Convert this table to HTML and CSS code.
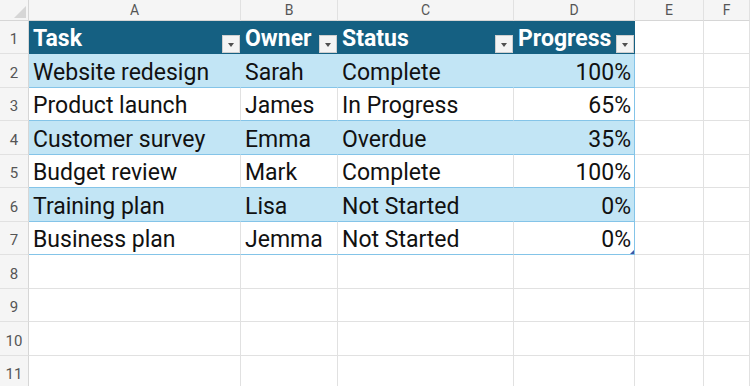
FILE: index.html
```html
<!DOCTYPE html>
<html>
<head>
<meta charset="utf-8">
<link rel="stylesheet" href="styles.css">
</head>
<body>
<div class="sheet">
  <div class="cell ch corner"><svg class="tri" width="14" height="14" viewBox="0 0 14 14"><polygon points="13,1 13,13 1,13" fill="#d6d6d6"/></svg></div>
  <div class="cell ch">A</div>
  <div class="cell ch">B</div>
  <div class="cell ch">C</div>
  <div class="cell ch">D</div>
  <div class="cell ch">E</div>
  <div class="cell ch">F</div>

  <div class="cell rh">1</div>
  <div class="cell th">Task<span class="fb"></span></div>
  <div class="cell th">Owner<span class="fb"></span></div>
  <div class="cell th">Status<span class="fb"></span></div>
  <div class="cell th last">Progress<span class="fb"></span></div>
  <div class="cell"></div>
  <div class="cell"></div>

  <div class="cell rh">2</div>
  <div class="cell tb">Website redesign</div>
  <div class="cell tb">Sarah</div>
  <div class="cell tb">Complete</div>
  <div class="cell tb last num">100%</div>
  <div class="cell"></div>
  <div class="cell"></div>

  <div class="cell rh">3</div>
  <div class="cell tw">Product launch</div>
  <div class="cell tw">James</div>
  <div class="cell tw">In Progress</div>
  <div class="cell tw last num">65%</div>
  <div class="cell"></div>
  <div class="cell"></div>

  <div class="cell rh">4</div>
  <div class="cell tb">Customer survey</div>
  <div class="cell tb">Emma</div>
  <div class="cell tb">Overdue</div>
  <div class="cell tb last num">35%</div>
  <div class="cell"></div>
  <div class="cell"></div>

  <div class="cell rh">5</div>
  <div class="cell tw">Budget review</div>
  <div class="cell tw">Mark</div>
  <div class="cell tw">Complete</div>
  <div class="cell tw last num">100%</div>
  <div class="cell"></div>
  <div class="cell"></div>

  <div class="cell rh">6</div>
  <div class="cell tb">Training plan</div>
  <div class="cell tb">Lisa</div>
  <div class="cell tb">Not Started</div>
  <div class="cell tb last num">0%</div>
  <div class="cell"></div>
  <div class="cell"></div>

  <div class="cell rh">7</div>
  <div class="cell tw">Business plan</div>
  <div class="cell tw">Jemma</div>
  <div class="cell tw">Not Started</div>
  <div class="cell tw last num">0%<span class="handle"></span></div>
  <div class="cell"></div>
  <div class="cell"></div>

  <div class="cell rh">8</div>
  <div class="cell"></div><div class="cell"></div><div class="cell"></div><div class="cell"></div><div class="cell"></div><div class="cell"></div>
  <div class="cell rh">9</div>
  <div class="cell"></div><div class="cell"></div><div class="cell"></div><div class="cell"></div><div class="cell"></div><div class="cell"></div>
  <div class="cell rh">10</div>
  <div class="cell"></div><div class="cell"></div><div class="cell"></div><div class="cell"></div><div class="cell"></div><div class="cell"></div>
  <div class="cell rh">11</div>
  <div class="cell"></div><div class="cell"></div><div class="cell"></div><div class="cell"></div><div class="cell"></div><div class="cell"></div>
</div>
</body>
</html>
```
FILE: styles.css
```css
html, body {
  margin: 0;
  padding: 0;
  background: #ffffff;
  overflow: hidden;
}

.sheet {
  display: grid;
  grid-template-columns: 29px 212px 97px 176px 121px 69px 1fr;
  grid-template-rows: 21px repeat(5, 33px 34px) 33px;
  width: 750px;
  height: 386px;
  overflow: hidden;
}

.cell {
  box-sizing: border-box;
  border-right: 1px solid #e1e1e1;
  border-bottom: 1px solid #e1e1e1;
  display: flex;
  align-items: flex-end;
  padding: 0 4px 3px 4px;
  font-family: Roboto, "Liberation Sans", sans-serif;
  font-size: 23px;
  line-height: 1;
  color: #111111;
  white-space: nowrap;
  overflow: hidden;
  position: relative;
}

.ch {
  background: #f5f5f5;
  align-items: center;
  justify-content: center;
  padding: 0;
  font-size: 14px;
  color: #555555;
  border-bottom-color: #d6d6d6;
}

.corner {
  justify-content: flex-end;
  align-items: flex-end;
  border-right-color: #d6d6d6;
}

.tri {
  display: block;
  margin: 0 1px 1px 0;
}

.rh {
  background: #f5f5f5;
  justify-content: center;
  padding: 0 0 6px 0;
  font-size: 15px;
  color: #555555;
  border-right-color: #d6d6d6;
}

.th {
  background: #156082;
  color: #ffffff;
  font-weight: 700;
  border-right-color: #156082;
  border-bottom-color: #156082;
}

.tb {
  background: #c2e5f5;
  border-right-color: #c2e5f5;
  border-bottom-color: #84c4e8;
}

.tw {
  border-bottom-color: #84c4e8;
}

.tb.last,
.tw.last {
  border-right-color: #84c4e8;
}

.num {
  justify-content: flex-end;
  padding-right: 3px;
}

.fb {
  position: absolute;
  right: 0;
  bottom: 0;
  width: 18px;
  height: 18px;
  box-sizing: border-box;
  background: #f4f4f4;
  border: 1px solid #cfcfcf;
}

.fb::after {
  content: "";
  position: absolute;
  left: 5px;
  top: 7px;
  width: 0;
  height: 0;
  border-left: 3.5px solid transparent;
  border-right: 3.5px solid transparent;
  border-top: 4px solid #505050;
}

.handle {
  position: absolute;
  right: 0;
  bottom: 0;
  width: 0;
  height: 0;
  border-left: 4px solid transparent;
  border-bottom: 4px solid #3f57a6;
}
```
